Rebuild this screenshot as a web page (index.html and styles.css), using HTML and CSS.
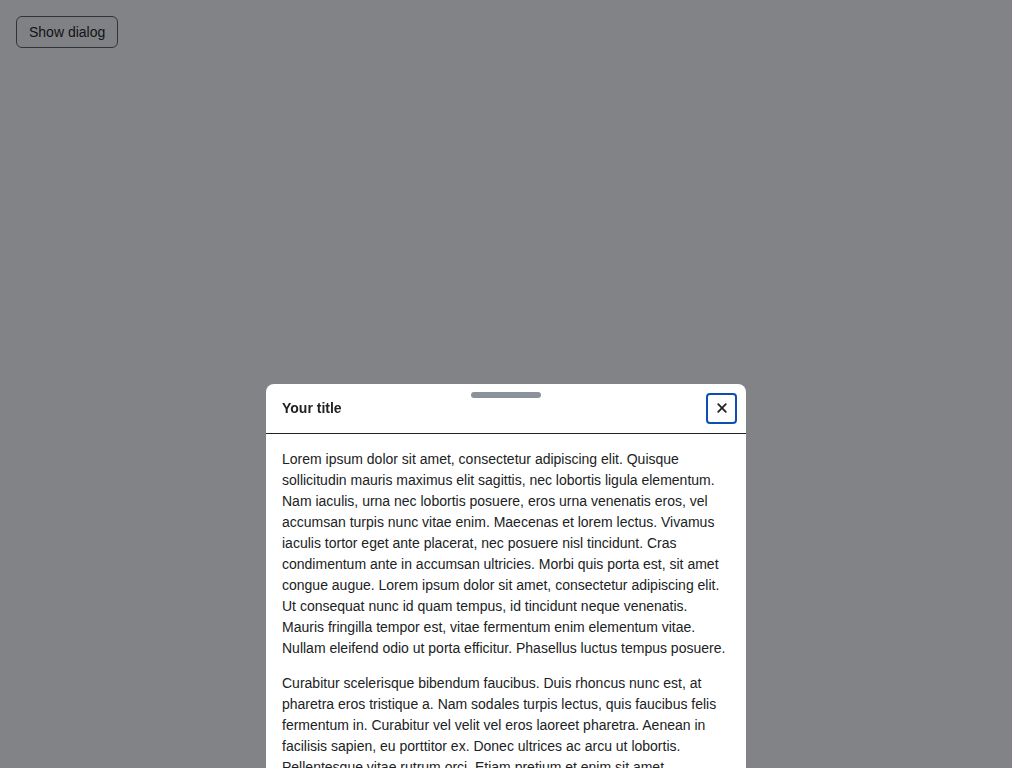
FILE: index.html
```html
<!DOCTYPE html>
<html lang="en">
<head>
<meta charset="utf-8">
<title>Dialog</title>
<link rel="stylesheet" href="styles.css">
</head>
<body>
<div class="page">
  <button class="show-btn" type="button">Show dialog</button>
</div>
<div class="overlay"></div>
<div class="dialog" role="dialog" aria-labelledby="dlg-title">
  <div class="dialog-header">
    <span class="handle"></span>
    <h2 class="dialog-title" id="dlg-title">Your title</h2>
    <button class="close-btn" type="button" aria-label="Close">
      <svg width="20" height="20" viewBox="0 0 20 20" aria-hidden="true"><path d="M6.2 6.2l7.6 7.6M13.8 6.2l-7.6 7.6" stroke="#202223" stroke-width="1.8" stroke-linecap="round" fill="none"/></svg>
    </button>
  </div>
  <div class="dialog-body">
    <p>Lorem ipsum dolor sit amet, consectetur adipiscing elit. Quisque sollicitudin mauris maximus elit sagittis, nec lobortis ligula elementum. Nam iaculis, urna nec lobortis posuere, eros urna venenatis eros, vel accumsan turpis nunc vitae enim. Maecenas et lorem lectus. Vivamus iaculis tortor eget ante placerat, nec posuere nisl tincidunt. Cras condimentum ante in accumsan ultricies. Morbi quis porta est, sit amet congue augue. Lorem ipsum dolor sit amet, consectetur adipiscing elit. Ut consequat nunc id quam tempus, id tincidunt neque venenatis. Mauris fringilla tempor est, vitae fermentum enim elementum vitae. Nullam eleifend odio ut porta efficitur. Phasellus luctus tempus posuere.</p>
    <p>Curabitur scelerisque bibendum faucibus. Duis rhoncus nunc est, at pharetra eros tristique a. Nam sodales turpis lectus, quis faucibus felis fermentum in. Curabitur vel velit vel eros laoreet pharetra. Aenean in facilisis sapien, eu porttitor ex. Donec ultrices ac arcu ut lobortis. Pellentesque vitae rutrum orci. Etiam pretium et enim sit amet scelerisque. Integer vel ante tempus, pellentesque nulla eu, placerat lorem.</p>
  </div>
</div>
</body>
</html>
```
FILE: styles.css
```css
html, body {
  margin: 0;
  padding: 0;
  background: #ffffff;
  font-family: "Liberation Sans", Arial, sans-serif;
  color: #202223;
  overflow: hidden;
  height: 100%;
}

.page {
  padding: 16px;
}

.show-btn {
  display: inline-flex;
  align-items: center;
  height: 32px;
  padding: 0 12px;
  font-family: "Liberation Sans", Arial, sans-serif;
  font-size: 14px;
  color: #202223;
  background: #fafbfb;
  border: 1px solid #5c5f62;
  border-radius: 6px;
}

.overlay {
  position: fixed;
  inset: 0;
  background: rgba(6, 8, 14, 0.5);
}

.dialog {
  position: absolute;
  left: 266px;
  top: 384px;
  width: 480px;
  background: #ffffff;
  border-radius: 8px 8px 0 0;
}

.dialog-header {
  position: relative;
  display: flex;
  align-items: center;
  justify-content: space-between;
  height: 48px;
  padding: 0 9px 1px 16px;
  border-bottom: 1px solid #202223;
}

.handle {
  position: absolute;
  left: 205px;
  top: 8px;
  width: 70px;
  height: 6px;
  border-radius: 3px;
  background: #8c9299;
}

.dialog-title {
  margin: 0;
  font-size: 14px;
  font-weight: 700;
  color: #202223;
}

.close-btn {
  display: flex;
  align-items: center;
  justify-content: center;
  width: 31px;
  height: 31px;
  padding: 0;
  background: #ffffff;
  border: 2px solid #0b4fb3;
  border-radius: 4px;
}

.dialog-body {
  padding: 15px 16px;
  font-size: 14px;
  line-height: 21px;
  color: #202223;
}

.dialog-body p {
  margin: 0 0 14px;
}
```
